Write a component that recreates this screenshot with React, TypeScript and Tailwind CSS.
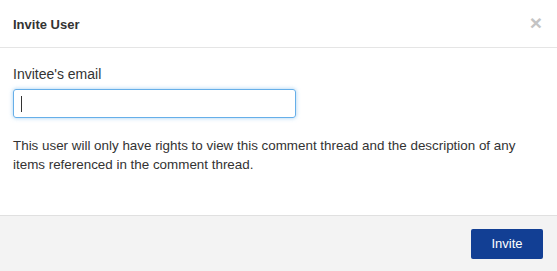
import React from 'react';

const App = () => {
  return (
    <div className="w-[557px] h-[271px] bg-white flex flex-col text-[#333] font-['Liberation_Sans',Arial,sans-serif]">
      <div className="h-[48px] flex items-center justify-between px-[13px] border-b border-[#e5e5e5] shrink-0">
        <h4 className="text-[13px] font-bold leading-none mt-[1px]">Invite User</h4>
        <button className="text-[#c4c4c4] text-[21px] font-bold leading-none mr-[2px] -mt-[3px]">×</button>
      </div>

      <div className="flex-1 px-[13px] pt-[17px]">
        <label className="block text-[14px] leading-[18px] mb-[6px]">Invitee's email</label>
        <div className="w-[283px] h-[29px] rounded-[3px] border border-[#66afe9] shadow-[0_0_4px_rgba(102,175,233,0.6)] flex items-center pl-[7px]">
          <div className="w-px h-[16px] bg-[#333]" />
        </div>
        <p className="text-[13.4px] leading-[19px] mt-[18px]">
          This user will only have rights to view this comment thread and the description of any
          <br />
          items referenced in the comment thread.
        </p>
      </div>

      <div className="h-[56px] shrink-0 bg-[#f3f3f3] border-t border-[#e0e0e0] flex items-center justify-end pr-[14px]">
        <button className="w-[72px] h-[30px] bg-[#123f94] rounded-[2px] text-white text-[13px]">Invite</button>
      </div>
    </div>
  );
};

export default App;
